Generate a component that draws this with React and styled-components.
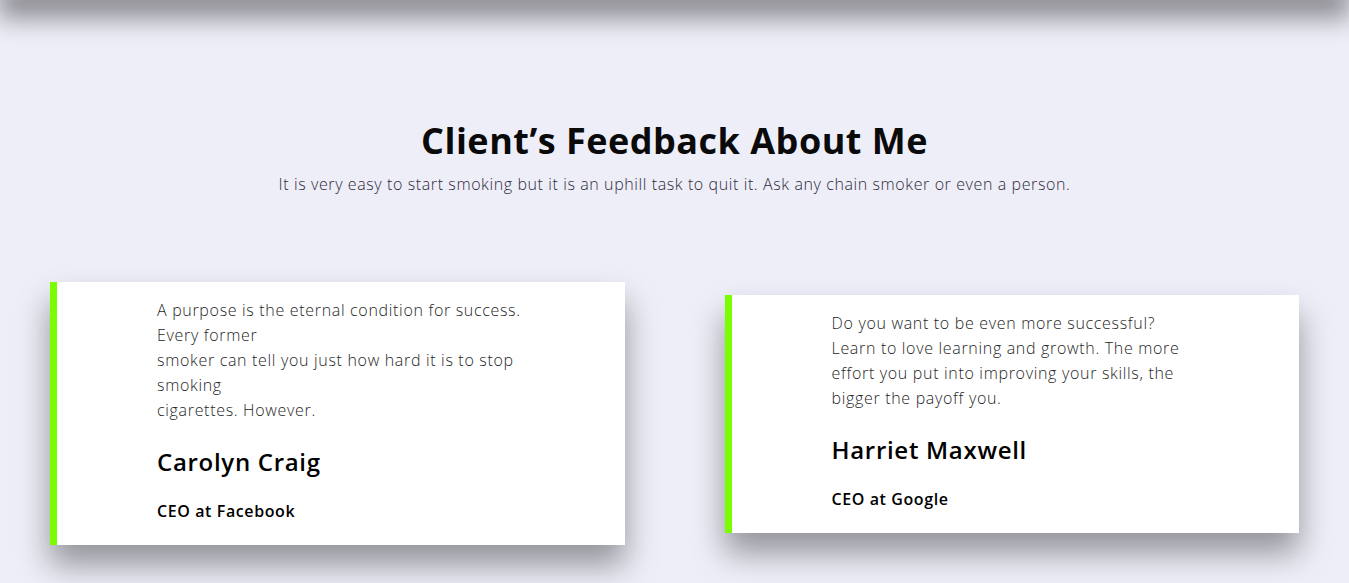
import styled, { createGlobalStyle } from "styled-components";

const GlobalStyle = createGlobalStyle`
  * { box-sizing: border-box; }
  html, body {
    margin: 0;
    padding: 0;
    background: #eeeef8;
    font-family: "Open Sans", "Noto Sans", sans-serif;
    overflow: hidden;
  }
`;

const testimonials = [
  {
    id: 1,
    lines: [
      "A purpose is the eternal condition for success.",
      "Every former",
      "smoker can tell you just how hard it is to stop",
      "smoking",
      "cigarettes. However.",
    ],
    name: "Carolyn Craig",
    role: "CEO at Facebook",
  },
  {
    id: 2,
    lines: [
      "Do you want to be even more successful?",
      "Learn to love learning and growth. The more",
      "effort you put into improving your skills, the",
      "bigger the payoff you.",
    ],
    name: "Harriet Maxwell",
    role: "CEO at Google",
  },
];

function App() {
  return (
    <Page>
      <GlobalStyle />
      <TopShadow />
      <Section>
        <Heading>
          <h2>Client’s Feedback About Me</h2>
          <p>
            It is very easy to start smoking but it is an uphill task to quit
            it. Ask any chain smoker or even a person.
          </p>
        </Heading>
        <Cards>
          {testimonials.map((t) => (
            <Card key={t.id}>
              <Quote>
                {t.lines.map((line, i) => (
                  <span key={i}>{line}</span>
                ))}
              </Quote>
              <Name>{t.name}</Name>
              <Role>{t.role}</Role>
            </Card>
          ))}
        </Cards>
      </Section>
    </Page>
  );
}

const Page = styled.div`
  width: 100%;
  height: 583px;
  position: relative;
`;

const TopShadow = styled.div`
  height: 0;
  margin: 0 16px;
  box-shadow: 0 0 26px 18px rgba(0, 0, 0, 0.42);
`;

const Section = styled.section`
  padding-top: 119px;
`;

const Heading = styled.div`
  text-align: center;
  h2 {
    margin: 0;
    font-size: 36px;
    line-height: 43px;
    font-weight: 700;
    letter-spacing: 0.5px;
    color: #0a0a0a;
  }
  p {
    margin: 10px 0 0;
    font-size: 16px;
    line-height: 24px;
    font-weight: 300;
    letter-spacing: 0.6px;
    color: #2e2a3a;
  }
`;

const Cards = styled.div`
  display: flex;
  align-items: center;
  gap: 100px;
  padding: 0 50px;
  margin-top: 86px;
`;

const Card = styled.div`
  flex: 1;
  background: #fff;
  border-left: 7px solid #7cfc00;
  padding: 16px 20px 22px 100px;
  box-shadow: 0 20px 30px rgba(0, 0, 0, 0.38);
`;

const Quote = styled.p`
  margin: 0;
  font-size: 16px;
  line-height: 25px;
  font-weight: 300;
  letter-spacing: 0.68px;
  color: #262626;
  span {
    display: block;
    white-space: nowrap;
  }
`;

const Name = styled.h3`
  margin: 21px 0 0;
  font-size: 24px;
  line-height: 36px;
  font-weight: 600;
  letter-spacing: 0.7px;
  color: #000;
`;

const Role = styled.h4`
  margin: 19px 0 0;
  font-size: 16px;
  line-height: 24px;
  font-weight: 600;
  letter-spacing: 0.6px;
  color: #000;
`;

export default App;
